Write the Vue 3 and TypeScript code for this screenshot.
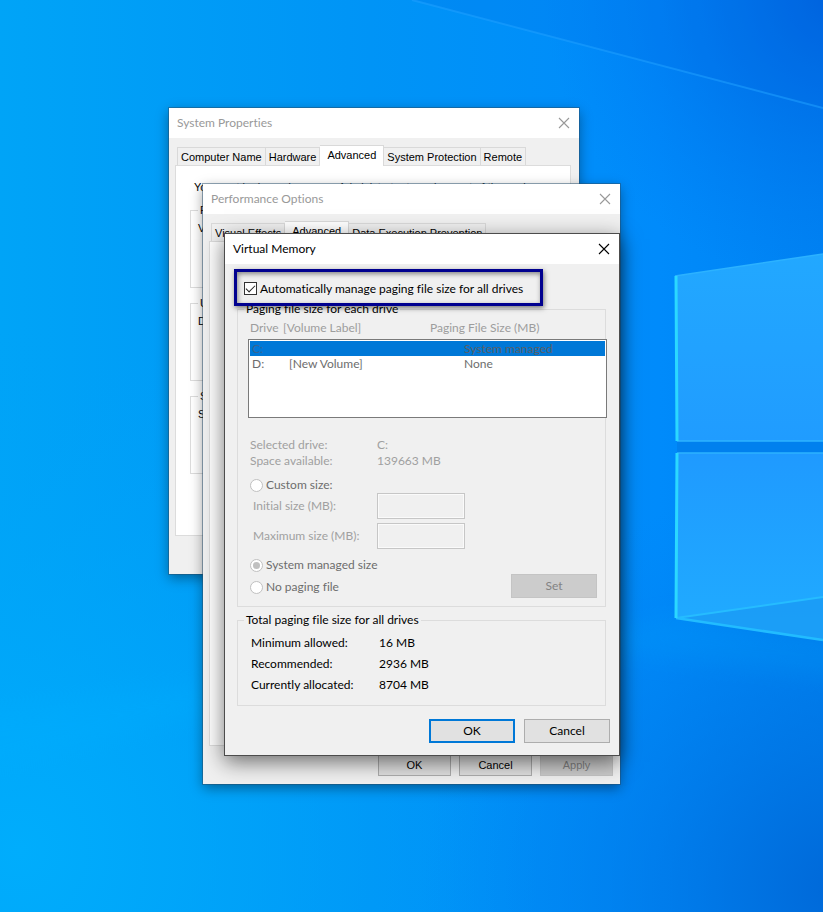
<script setup lang="ts">
import { ref } from 'vue'

interface DriveRow {
  drive: string
  label: string
  size: string
}

interface Group {
  title: string
  text: string
}

const propertyTabs = ['Computer Name', 'Hardware', 'Advanced', 'System Protection', 'Remote']
const performanceTabs = ['Visual Effects', 'Advanced', 'Data Execution Prevention']

const propertyGroups: Group[] = [
  { title: 'Performance', text: 'Visual effects, processor scheduling, memory usage, and virtual memory' },
  { title: 'User Profiles', text: 'Desktop settings related to your sign-in' },
  { title: 'Startup and Recovery', text: 'System startup, system failure, and debugging information' },
]

const drives: DriveRow[] = [
  { drive: 'C:', label: '', size: 'System managed' },
  { drive: 'D:', label: '[New Volume]', size: 'None' },
]

const totals = [
  { name: 'Minimum allowed:', value: '16 MB' },
  { name: 'Recommended:', value: '2936 MB' },
  { name: 'Currently allocated:', value: '8704 MB' },
]

const selectedDrive = ref('C:')
const automatic = ref(true)
const mode = ref('system')
const initialSize = ref('')
const maximumSize = ref('')
</script>

<template>
  <main class="desktop">
    <svg class="wallpaper" viewBox="0 0 823 912" preserveAspectRatio="xMaxYMid slice" aria-hidden="true">
      <defs>
        <linearGradient id="base" x1="0" y1="0" x2="1" y2="0">
          <stop offset="0" stop-color="#00a4f7" />
          <stop offset="0.45" stop-color="#0094f6" />
          <stop offset="0.8" stop-color="#008bfb" />
          <stop offset="1" stop-color="#0082f2" />
        </linearGradient>
        <radialGradient id="dark-top" gradientUnits="userSpaceOnUse" cx="843" cy="-10" r="300">
          <stop offset="0" stop-color="#0060dc" />
          <stop offset="1" stop-color="#0078f0" stop-opacity="0" />
        </radialGradient>
        <radialGradient id="dark-bottom" gradientUnits="userSpaceOnUse" cx="843" cy="890" r="420">
          <stop offset="0" stop-color="#0068d8" />
          <stop offset="1" stop-color="#0080ec" stop-opacity="0" />
        </radialGradient>
        <radialGradient id="bright-left" gradientUnits="userSpaceOnUse" cx="20" cy="850" r="520">
          <stop offset="0" stop-color="#00adfc" />
          <stop offset="1" stop-color="#00a0f8" stop-opacity="0" />
        </radialGradient>
        <linearGradient id="pane-top" x1="0" y1="0" x2="0" y2="1">
          <stop offset="0" stop-color="#22a8ff" />
          <stop offset="1" stop-color="#209cff" />
        </linearGradient>
        <linearGradient id="pane-bottom" x1="0" y1="0" x2="0" y2="1">
          <stop offset="0" stop-color="#1f9aff" />
          <stop offset="1" stop-color="#20acff" />
        </linearGradient>
        <filter id="soft" x="-20%" y="-60%" width="140%" height="220%">
          <feGaussianBlur stdDeviation="12" />
        </filter>
      </defs>
      <rect width="823" height="912" fill="url(#base)" />
      <rect width="823" height="912" fill="url(#bright-left)" />
      <rect width="823" height="912" fill="url(#dark-top)" />
      <rect width="823" height="912" fill="url(#dark-bottom)" />
      <path d="M412 0 L823 108 L823 0 Z" fill="#006ae4" opacity="0.18" />
      <path d="M412 0 L823 108" stroke="#1fa0ff" stroke-width="2" opacity="0.55" fill="none" />
      <path d="M-30 710 L260 676 L260 700 L-30 780 Z" fill="#00b0ff" opacity="0.25" filter="url(#soft)" />
      <path d="M600 632 L676 618 L860 645 L860 680 L600 650 Z" fill="#00a0fa" opacity="0.25" filter="url(#soft)" />
      <path d="M675 276 L823 254 V441 H677 Z" fill="url(#pane-top)" />
      <path d="M677 441 H823 V453 H677 Z" fill="#0080ee" />
      <path d="M677 453 H823 V640 L676 618 Z" fill="url(#pane-bottom)" />
      <path d="M676 618 L823 597 V640 Z" fill="#1a98f4" opacity="0.7" />
      <path d="M675 276 L823 254 M677 441 H823 M677 453 H823" stroke="#2cb2ff" stroke-width="1.5" fill="none" />
      <path d="M676 618 L823 597" stroke="#26bcff" stroke-width="2" fill="none" />
      <path d="M676 618 L823 640" stroke="#22bcff" stroke-width="2.5" fill="none" />
      <path d="M676 276 L677 441 M677 453 L676 618" stroke="#2bd8ff" stroke-width="3" fill="none" />
    </svg>

    <section class="window properties" aria-label="System Properties">
      <header class="titlebar inactive">
        <h2>System Properties</h2>
        <button type="button" class="close" aria-label="Close System Properties">
          <svg viewBox="0 0 12 12"><path d="M1 1 L11 11 M11 1 L1 11" /></svg>
        </button>
      </header>
      <div class="tabbed">
        <nav class="tabs">
          <button v-for="tab in propertyTabs" :key="tab" type="button" class="tab" :class="{ active: tab === 'Advanced' }">{{ tab }}</button>
        </nav>
        <div class="panel properties-panel">
          <p class="intro">You must be logged on as an Administrator to make most of these changes.</p>
          <fieldset v-for="group in propertyGroups" :key="group.title" class="group summary">
            <legend>{{ group.title }}</legend>
            <p>{{ group.text }}</p>
          </fieldset>
        </div>
      </div>
    </section>

    <section class="window performance" aria-label="Performance Options">
      <header class="titlebar inactive">
        <h2>Performance Options</h2>
        <button type="button" class="close" aria-label="Close Performance Options">
          <svg viewBox="0 0 12 12"><path d="M1 1 L11 11 M11 1 L1 11" /></svg>
        </button>
      </header>
      <div class="tabbed">
        <nav class="tabs">
          <button v-for="tab in performanceTabs" :key="tab" type="button" class="tab" :class="{ active: tab === 'Advanced' }">{{ tab }}</button>
        </nav>
        <div class="panel performance-panel"></div>
      </div>
      <footer class="actions small">
        <button type="button" class="push">OK</button>
        <button type="button" class="push">Cancel</button>
        <button type="button" class="push" disabled>Apply</button>
      </footer>
    </section>

    <section class="window memory" aria-label="Virtual Memory">
      <header class="titlebar">
        <h2>Virtual Memory</h2>
        <button type="button" class="close" aria-label="Close Virtual Memory">
          <svg viewBox="0 0 12 12"><path d="M1 1 L11 11 M11 1 L1 11" /></svg>
        </button>
      </header>
      <div class="body">
        <label class="automatic">
          <input v-model="automatic" type="checkbox" />
          <span>Automatically manage paging file size for all drives</span>
        </label>

        <fieldset class="group each">
          <legend>Paging file size for each drive</legend>
          <table class="drives">
            <thead>
              <tr>
                <th>Drive</th>
                <th>[Volume Label]</th>
                <th>Paging File Size (MB)</th>
              </tr>
            </thead>
            <tbody>
              <tr v-for="row in drives" :key="row.drive" :class="{ selected: row.drive === selectedDrive }">
                <td>{{ row.drive }}</td>
                <td>{{ row.label }}</td>
                <td>{{ row.size }}</td>
              </tr>
            </tbody>
          </table>

          <dl class="pairs faint">
            <dt>Selected drive:</dt>
            <dd>C:</dd>
            <dt>Space available:</dt>
            <dd>139663 MB</dd>
          </dl>

          <label class="choice">
            <input v-model="mode" type="radio" name="mode" value="custom" disabled />
            <span>Custom size:</span>
          </label>
          <div class="sizes faint">
            <label for="initial">Initial size (MB):</label>
            <input id="initial" v-model="initialSize" type="text" disabled />
            <label for="maximum">Maximum size (MB):</label>
            <input id="maximum" v-model="maximumSize" type="text" disabled />
          </div>
          <div class="lower">
            <div class="choices">
              <label class="choice">
                <input v-model="mode" type="radio" name="mode" value="system" disabled />
                <span>System managed size</span>
              </label>
              <label class="choice">
                <input v-model="mode" type="radio" name="mode" value="none" disabled />
                <span>No paging file</span>
              </label>
            </div>
            <button type="button" class="push" disabled>Set</button>
          </div>
        </fieldset>

        <fieldset class="group total">
          <legend>Total paging file size for all drives</legend>
          <dl class="pairs">
            <template v-for="item in totals" :key="item.name">
              <dt>{{ item.name }}</dt>
              <dd>{{ item.value }}</dd>
            </template>
          </dl>
        </fieldset>

        <footer class="actions">
          <button type="button" class="push default">OK</button>
          <button type="button" class="push">Cancel</button>
        </footer>
      </div>
    </section>
  </main>
</template>

<style>
body {
  margin: 0;
}
</style>

<style scoped>
.desktop {
  position: relative;
  min-height: 100vh;
  overflow: hidden;
  background: #0094f6;
  color: #000;
  font: 12px/16px Lato, "Open Sans", sans-serif;
  font-variant-ligatures: none;
}

.desktop *,
.desktop *::before {
  box-sizing: border-box;
}

.wallpaper {
  position: absolute;
  inset: 0;
  width: 100%;
  height: 100%;
}

button,
input {
  margin: 0;
  font: inherit;
  color: inherit;
}

p,
dl,
dd,
h2 {
  margin: 0;
}

.window {
  position: absolute;
  background: #f0f0f0;
}

.properties {
  left: 169px;
  top: 108px;
  width: 410px;
  padding-bottom: 38px;
  box-shadow: 0 0 0 1px rgba(40, 80, 110, 0.5), 0 4px 12px rgba(0, 0, 0, 0.4);
}

.performance {
  left: 203px;
  top: 184px;
  width: 417px;
  padding-bottom: 8px;
  box-shadow: 0 0 0 1px rgba(40, 80, 110, 0.5), 0 4px 12px rgba(0, 0, 0, 0.4);
}

.memory {
  left: 224px;
  top: 233px;
  width: 396px;
  border: 1px solid #4c4c4c;
  box-shadow: 0 6px 20px rgba(0, 0, 0, 0.55);
}

.titlebar {
  display: flex;
  align-items: center;
  justify-content: space-between;
  height: 30px;
  padding: 0 8px;
  background: #fff;
}

.titlebar h2 {
  font-size: 12px;
  font-weight: 400;
}

.titlebar.inactive {
  color: #999;
}

.close {
  display: grid;
  place-items: center;
  width: 14px;
  height: 14px;
  padding: 0;
  border: 0;
  background: none;
}

.close svg {
  width: 12px;
  height: 12px;
  fill: none;
  stroke: currentColor;
  stroke-width: 1.1;
}

.tabbed {
  padding: 7px 8px 0 6px;
  font-family: "Liberation Sans", sans-serif;
  font-size: 11px;
}

.tabs {
  display: flex;
  align-items: flex-end;
  padding-left: 2px;
}

.tab {
  height: 18px;
  padding: 0 3px;
  border: 1px solid #d9d9d9;
  border-bottom: 0;
  border-left-width: 0;
  background: #f0f0f0;
  white-space: nowrap;
}

.tab:first-child {
  border-left-width: 1px;
}

.tab.active {
  position: relative;
  height: 21px;
  margin-bottom: -1px;
  padding: 0 7px 2px;
  background: #fff;
}

.panel {
  border: 1px solid #dcdcdc;
  background: #fff;
}

.properties-panel {
  height: 371px;
  padding: 13px 14px;
}

.performance-panel {
  height: 505px;
  margin-bottom: 7px;
}

.intro {
  padding-left: 4px;
  white-space: nowrap;
}

.group {
  min-width: 0;
  margin: 0;
  border: 1px solid #dcdcdc;
}

.group legend {
  padding: 0 2px;
}

.summary {
  height: 86px;
  margin-top: 7px;
  padding: 2px 7px;
  white-space: nowrap;
}

.actions {
  display: flex;
  justify-content: flex-end;
  gap: 9px;
}

.actions.small {
  gap: 8px;
  padding-right: 7px;
  font-family: "Liberation Sans", sans-serif;
  font-size: 11px;
}

.push {
  width: 86px;
  height: 24px;
  padding: 0;
  border: 1px solid #adadad;
  background: #e1e1e1;
}

.small .push {
  width: 73px;
  height: 23px;
}

.push.default {
  border: 2px solid #0078d7;
}

.push:disabled {
  border-color: #c4c4c4;
  background: #ccc;
  color: #838383;
}

.body {
  padding: 5px 13px 12px 12px;
}

.automatic {
  position: relative;
  z-index: 1;
  display: flex;
  align-items: center;
  gap: 3px;
  width: fit-content;
  height: 37px;
  margin-left: -3px;
  padding: 2px 17px 0 7px;
  border: 3px solid #00008f;
  box-shadow: 1px 2px 5px rgba(0, 0, 0, 0.5), inset 1px 2px 5px rgba(0, 0, 0, 0.45);
}

.automatic input {
  appearance: none;
  display: grid;
  place-items: center;
  width: 13px;
  height: 13px;
  border: 1px solid #333;
  background: #fff;
}

.automatic input:checked::before {
  content: "";
  width: 9px;
  height: 5px;
  margin-top: -3px;
  border: solid #222;
  border-width: 0 0 1px 1px;
  transform: rotate(-45deg);
}

.group.each {
  margin-top: -5px;
  padding: 3px 8px 8px 10px;
}

.each legend {
  margin-left: -4px;
}

.total legend {
  margin-left: -7px;
}

.drives {
  display: block;
  width: 359px;
}

.drives thead,
.drives tbody {
  display: block;
}

.drives thead {
  padding: 0 2px;
  color: #9d9d9d;
}

.drives th {
  padding: 0;
  font-weight: 400;
  text-align: left;
  white-space: nowrap;
}

.drives td {
  padding: 0;
}

.drives tr {
  display: grid;
  grid-template-columns: 33px 147px 1fr;
}

.drives tbody {
  height: 79px;
  margin-top: 3px;
  padding: 1px;
  border: 1px solid #7a7a7a;
  background: #fff;
  color: #6d6d6d;
}

.drives tbody tr {
  grid-template-columns: 37px 175px 1fr;
  padding: 0 2px;
  line-height: 15px;
}

.drives tbody tr.selected {
  background: #0078d7;
  color: #5a5f66;
}

.drives tr.selected td:first-child {
  color: #3a6590;
}

.pairs {
  display: grid;
  grid-template-columns: 127px 1fr;
}

.faint {
  color: #a0a0a0;
}

.each .pairs {
  margin-top: 19px;
  padding-left: 2px;
}

.choice {
  display: flex;
  align-items: center;
  gap: 3px;
  height: 16px;
  color: #6d6d6d;
}

.each > .choice {
  margin: 8px 0 0 2px;
}

.choice input {
  appearance: none;
  display: grid;
  place-items: center;
  width: 13px;
  height: 13px;
  border: 1px solid #c0c0c0;
  border-radius: 50%;
  background: #fff;
}

.choice input:checked::before {
  content: "";
  width: 7px;
  height: 7px;
  border-radius: 50%;
  background: #c0c0c0;
}

.sizes {
  display: grid;
  grid-template-columns: 124px 88px;
  row-gap: 4px;
  align-items: center;
  padding-left: 5px;
}

.sizes input {
  width: 100%;
  height: 26px;
  padding: 0 4px;
  border: 1px solid #c6c6c6;
  background: #f0f0f0;
  box-shadow: inset 0 0 0 1px #fafafa;
}

.lower {
  display: flex;
  align-items: flex-end;
  justify-content: space-between;
  padding: 8px 0 0 2px;
}

.choices {
  display: grid;
  gap: 6px;
  padding-bottom: 3px;
}

.group.total {
  margin-top: 5px;
  padding: 4px 13px 10px;
}

.total .pairs {
  grid-template-columns: 128px 1fr;
  line-height: 21px;
}

.body .actions {
  margin: 13px -4px 0 0;
}
</style>
